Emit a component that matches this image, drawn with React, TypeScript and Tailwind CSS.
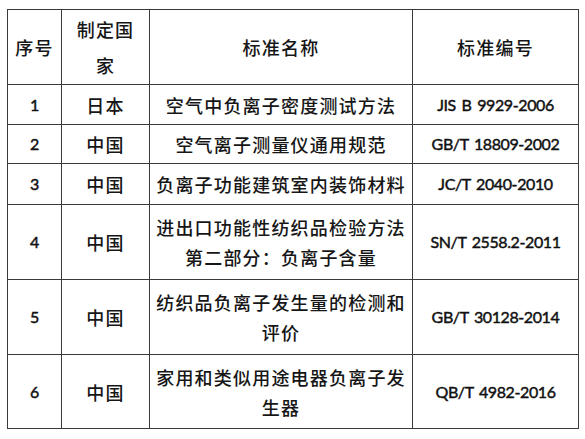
import React from "react";

const cjk = '"Noto Sans CJK SC", "Noto Sans", sans-serif';
const latin = 'Lato, "Noto Sans CJK SC", sans-serif';

type Row = { no: string; country: string; name: React.ReactNode; code: string; h: string };

const rows: Row[] = [
  { no: "1", country: "日本", name: "空气中负离子密度测试方法", code: "JIS B 9929-2006", h: "h-[40px]" },
  { no: "2", country: "中国", name: "空气离子测量仪通用规范", code: "GB/T 18809-2002", h: "h-[39px]" },
  { no: "3", country: "中国", name: "负离子功能建筑室内装饰材料", code: "JC/T 2040-2010", h: "h-[41px]" },
  {
    no: "4",
    country: "中国",
    name: (
      <>
        进出口功能性纺织品检验方法
        <br />
        第二部分：负离子含量
      </>
    ),
    code: "SN/T 2558.2-2011",
    h: "h-[75px]",
  },
  {
    no: "5",
    country: "中国",
    name: (
      <>
        纺织品负离子发生量的检测和
        <br />
        评价
      </>
    ),
    code: "GB/T 30128-2014",
    h: "h-[75px]",
  },
  {
    no: "6",
    country: "中国",
    name: (
      <>
        家用和类似用途电器负离子发
        <br />
        生器
      </>
    ),
    code: "QB/T 4982-2016",
    h: "h-[74px]",
  },
];

export default function App() {
  const cell = "border border-[#3a3a3a] text-center align-middle p-0";
  const cjkText = "text-[18px] font-medium tracking-[1.2px] leading-[30px] text-[#161616]";
  const latinText =
    "text-[16px] font-normal tracking-[-0.4px] [word-spacing:2px] leading-[30px] text-[#111111] [-webkit-text-stroke:0.45px_#111111]";
  return (
    <div className="w-[585px] h-[439px] bg-white pt-[9px] pl-[7px]">
      <table className="border-collapse table-fixed w-[571px]">
        <colgroup>
          <col className="w-[54px]" />
          <col className="w-[88px]" />
          <col className="w-[263px]" />
          <col className="w-[166px]" />
        </colgroup>
        <tbody>
          <tr className="h-[75px]">
            <td className={`${cell} ${cjkText}`} style={{ fontFamily: cjk }}>序号</td>
            <td className={`${cell} ${cjkText} leading-[36px]`} style={{ fontFamily: cjk }}>
              制定国
              <br />
              家
            </td>
            <td className={`${cell} ${cjkText}`} style={{ fontFamily: cjk }}>标准名称</td>
            <td className={`${cell} ${cjkText}`} style={{ fontFamily: cjk }}>标准编号</td>
          </tr>
          {rows.map((r) => (
            <tr key={r.no} className={r.h}>
              <td className={`${cell} ${latinText}`} style={{ fontFamily: latin }}>{r.no}</td>
              <td className={`${cell} ${cjkText}`} style={{ fontFamily: cjk }}>{r.country}</td>
              <td className={`${cell} ${cjkText}`} style={{ fontFamily: cjk }}>{r.name}</td>
              <td className={`${cell} ${latinText}`} style={{ fontFamily: latin }}>{r.code}</td>
            </tr>
          ))}
        </tbody>
      </table>
    </div>
  );
}
